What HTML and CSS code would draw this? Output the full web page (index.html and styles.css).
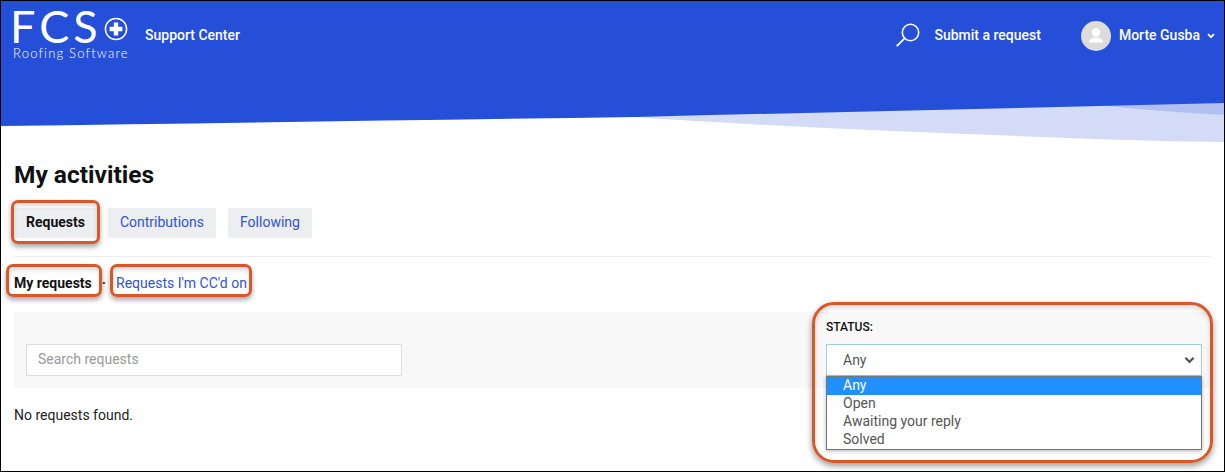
FILE: index.html
```html
<!DOCTYPE html>
<html lang="en">
<head>
    <meta charset="UTF-8">
    <meta name="viewport" content="width=device-width, initial-scale=1.0">
    <title>My activities</title>
    <link rel="stylesheet" href="styles.css">
</head>
<body>
    <div class="page">
        <header class="hero">
            <svg class="wave" viewBox="0 0 1223 50" preserveAspectRatio="none">
                <!-- blue on top of the two pale swooshes -->
                <path d="M635 25 C760 34 890 39 1067 46 C1120 48 1170 49.500 1223 50 L1223 0 L635 0 Z" fill="#d3dbf6" />
                <path d="M1105 14 C1145 18 1185 21 1223 23 L1223 0 L1105 0 Z" fill="#b1c0f0" />
                <path d="M0 34 C220 31 430 28 635 25 C830 20 1030 16 1223 11 L1223 0 L0 0 Z" fill="#254fd9" />
            </svg>
            <div class="hero-bar">
                <a class="logo" href="#">
                    <span class="logo-top">
                        <span class="logo-name">FCS</span>
                        <svg class="logo-plus" viewBox="0 0 24 24">
                            <circle cx="12" cy="12" r="10.600" fill="none" stroke="#fff" stroke-width="1.500" />
                            <path d="M9.800 5.600h4.400v4.200h4.200v4.400h-4.200v4.200H9.800v-4.200H5.600V9.800h4.200z" fill="#fff" />
                        </svg>
                    </span>
                    <span class="logo-sub">Roofing Software</span>
                </a>
                <a class="hero-link hero-title" href="#">Support Center</a>
                <div class="hero-right">
                    <svg class="search-icon" viewBox="0 0 24 24">
                        <circle cx="14.500" cy="9.500" r="8.200" fill="none" stroke="#fff" stroke-width="1.600" />
                        <path d="M8.600 15.400 1.200 22.600" fill="none" stroke="#fff" stroke-width="1.800" stroke-linecap="round" />
                    </svg>
                    <a class="hero-link submit-link" href="#">Submit a request</a>
                    <svg class="avatar" viewBox="0 0 30 30">
                        <circle cx="15" cy="15" r="15" fill="#dcdcdc" />
                        <circle cx="15" cy="11.500" r="4.200" fill="#fff" />
                        <path d="M8 21.500c0-3.600 3-5 7-5s7 1.400 7 5z" fill="#fff" />
                    </svg>
                    <a class="hero-link user-link" href="#">Morte Gusba</a>
                    <svg class="chevron" viewBox="0 0 8 6">
                        <path d="M1 1.200 4 4.200 7 1.200" fill="none" stroke="#fff" stroke-width="1.700" />
                    </svg>
                </div>
            </div>
        </header>

        <main class="content">
            <h1 class="page-title">My activities</h1>

            <nav class="tabs">
                <a class="tab tab-active callout" href="#">Requests</a>
                <a class="tab" href="#">Contributions</a>
                <a class="tab" href="#">Following</a>
            </nav>

            <div class="subnav">
                <span class="subnav-current callout">My requests</span>
                <span class="subnav-dot">·</span>
                <a class="subnav-link callout" href="#">Requests I'm CC'd on</a>
            </div>

            <section class="filters">
                <input class="search-input" type="text" placeholder="Search requests">
                <div class="status-filter">
                    <span class="status-label">Status:</span>
                    <div class="select-box">
                        <span>Any</span>
                        <svg class="select-arrow" viewBox="0 0 12 8">
                            <path d="M1.500 1.500 6 6 10.500 1.500" fill="none" stroke="#555" stroke-width="2.400" />
                        </svg>
                    </div>
                    <ul class="select-list">
                        <li class="select-option selected">Any</li>
                        <li class="select-option">Open</li>
                        <li class="select-option">Awaiting your reply</li>
                        <li class="select-option">Solved</li>
                    </ul>
                </div>
            </section>

            <p class="empty-note">No requests found.</p>
        </main>
    </div>
</body>
</html>
```
FILE: styles.css
```css
* {
    box-sizing: border-box;
}

body {
    margin: 0;
    background-color: #fff;
    font-family: Roboto, 'Liberation Sans', sans-serif;
    font-size: 14px;
    color: #111;
}

a {
    text-decoration: none;
}

.page {
    height: 472px;
    border: 1px solid #000;
    overflow: hidden;
}

/* Header */
.hero {
    position: relative;
    height: 141px;
    background: linear-gradient(#254fd9, #254fd9) top / 100% 91px no-repeat;
}

.hero-bar {
    position: relative;
    display: flex;
    align-items: flex-start;
    padding: 9px 9px 0 12px;
}

.logo {
    display: flex;
    flex-direction: column;
    width: 132px;
    color: #fff;
    font-family: Lato, sans-serif;
}

.logo-top {
    display: flex;
    align-items: flex-start;
    justify-content: space-between;
    width: 115px;
}

.logo-name {
    margin-left: -3px;
    font-size: 45px;
    font-weight: 400;
    line-height: 33px;
    letter-spacing: 4px;
}

.logo-plus {
    width: 24px;
    height: 24px;
    margin-top: 7px;
}

.logo-sub {
    margin-top: 4px;
    font-size: 13px;
    font-weight: 300;
    line-height: 13px;
    letter-spacing: 1.200px;
}

.hero-link {
    color: #fff;
    font-weight: 500;
    line-height: 18px;
}

.hero-title {
    margin-top: 16px;
}

.hero-right {
    display: flex;
    align-items: center;
    margin-left: auto;
    margin-top: 11px;
}

.search-icon {
    width: 24px;
    height: 24px;
    margin: 0 14px 2px 0;
}

.submit-link {
    margin: 0 40px 2px 0;
}

.avatar {
    width: 30px;
    height: 30px;
    margin-right: 8px;
}

.user-link {
    margin: 0 7px 2px 0;
}

.chevron {
    width: 8px;
    height: 6px;
}

.wave {
    position: absolute;
    left: 0;
    bottom: 0;
    width: 100%;
    height: 50px;
}

/* Content */
.content {
    padding: 0 13px;
}

.page-title {
    margin: 18px 0 18px;
    font-size: 24.500px;
    font-weight: 700;
    line-height: 30px;
}

.tabs {
    display: flex;
    gap: 12px;
    padding-bottom: 18px;
    border-bottom: 1px solid #eee;
}

.tab {
    height: 30px;
    padding: 0 12px;
    background-color: #eceef1;
    color: #2f54d6;
    line-height: 29px;
}

.tab-active {
    margin-right: -1px;
    color: #111;
    font-weight: 700;
}

.callout {
    position: relative;
}

.callout::after {
    content: "";
    position: absolute;
    border: 3px solid #d9582a;
    border-radius: 7px;
    box-shadow: 0 3px 5px rgba(0, 0, 0, 0.35), inset 0 3px 4px rgba(0, 0, 0, 0.15);
    pointer-events: none;
}

.tab-active::after {
    inset: -8px -3px -6px -3px;
}

.subnav {
    display: flex;
    align-items: center;
    margin-top: 17px;
    line-height: 18px;
}

.subnav-current {
    font-weight: 700;
}

.subnav-current::after {
    inset: -10px -10px -5px -8px;
}

.subnav-dot {
    margin: 0 4px 0 10px;
    color: #333;
    font-weight: 700;
}

.subnav-link {
    margin-left: 6px;
    color: #2f54d6;
}

.subnav-link::after {
    inset: -10px -5px -5px -6px;
}

.filters {
    display: flex;
    justify-content: space-between;
    height: 76px;
    margin-top: 20px;
    padding: 32px 9px 0 12px;
    background-color: #f8f8f8;
}

.search-input {
    width: 376px;
    height: 32px;
    padding: 0 11px 2px;
    border: 1px solid #ddd;
    background-color: #fff;
    font-family: inherit;
    font-size: 14px;
}

.search-input::placeholder {
    color: #999;
    opacity: 1;
}

.status-filter {
    position: relative;
    width: 376px;
    height: 32px;
}

/* the big callout round the status filter */
.status-filter::after {
    content: "";
    position: absolute;
    inset: -42px -11px -87px -14px;
    border: 3px solid #d9582a;
    border-radius: 22px;
    box-shadow: 0 3px 6px rgba(0, 0, 0, 0.4), inset 0 3px 5px rgba(0, 0, 0, 0.15);
    pointer-events: none;
}

.status-label {
    position: absolute;
    left: 0;
    top: -24px;
    font-size: 12px;
    font-weight: 500;
    line-height: 14px;
    text-transform: uppercase;
}

.select-box {
    display: flex;
    align-items: center;
    justify-content: space-between;
    height: 32px;
    padding: 0 6px 0 16px;
    border: 1px solid #9ed0e0;
    background-color: #fff;
    color: #555;
}

.select-arrow {
    width: 11px;
    height: 8px;
}

.select-list {
    position: absolute;
    left: 0;
    top: 32px;
    width: 100%;
    margin: 0;
    padding: 0;
    border: 1px solid #767676;
    background-color: #fff;
    box-shadow: 0 1px 4px rgba(0, 0, 0, 0.3);
    list-style: none;
    z-index: 1;
}

.select-option {
    height: 18px;
    padding-left: 16px;
    color: #555;
    line-height: 16px;
}

.select-option.selected {
    background-color: #1e90ff;
    color: #fff;
}

.empty-note {
    margin: 18px 0 0;
    line-height: 18px;
    color: #222;
}
```
